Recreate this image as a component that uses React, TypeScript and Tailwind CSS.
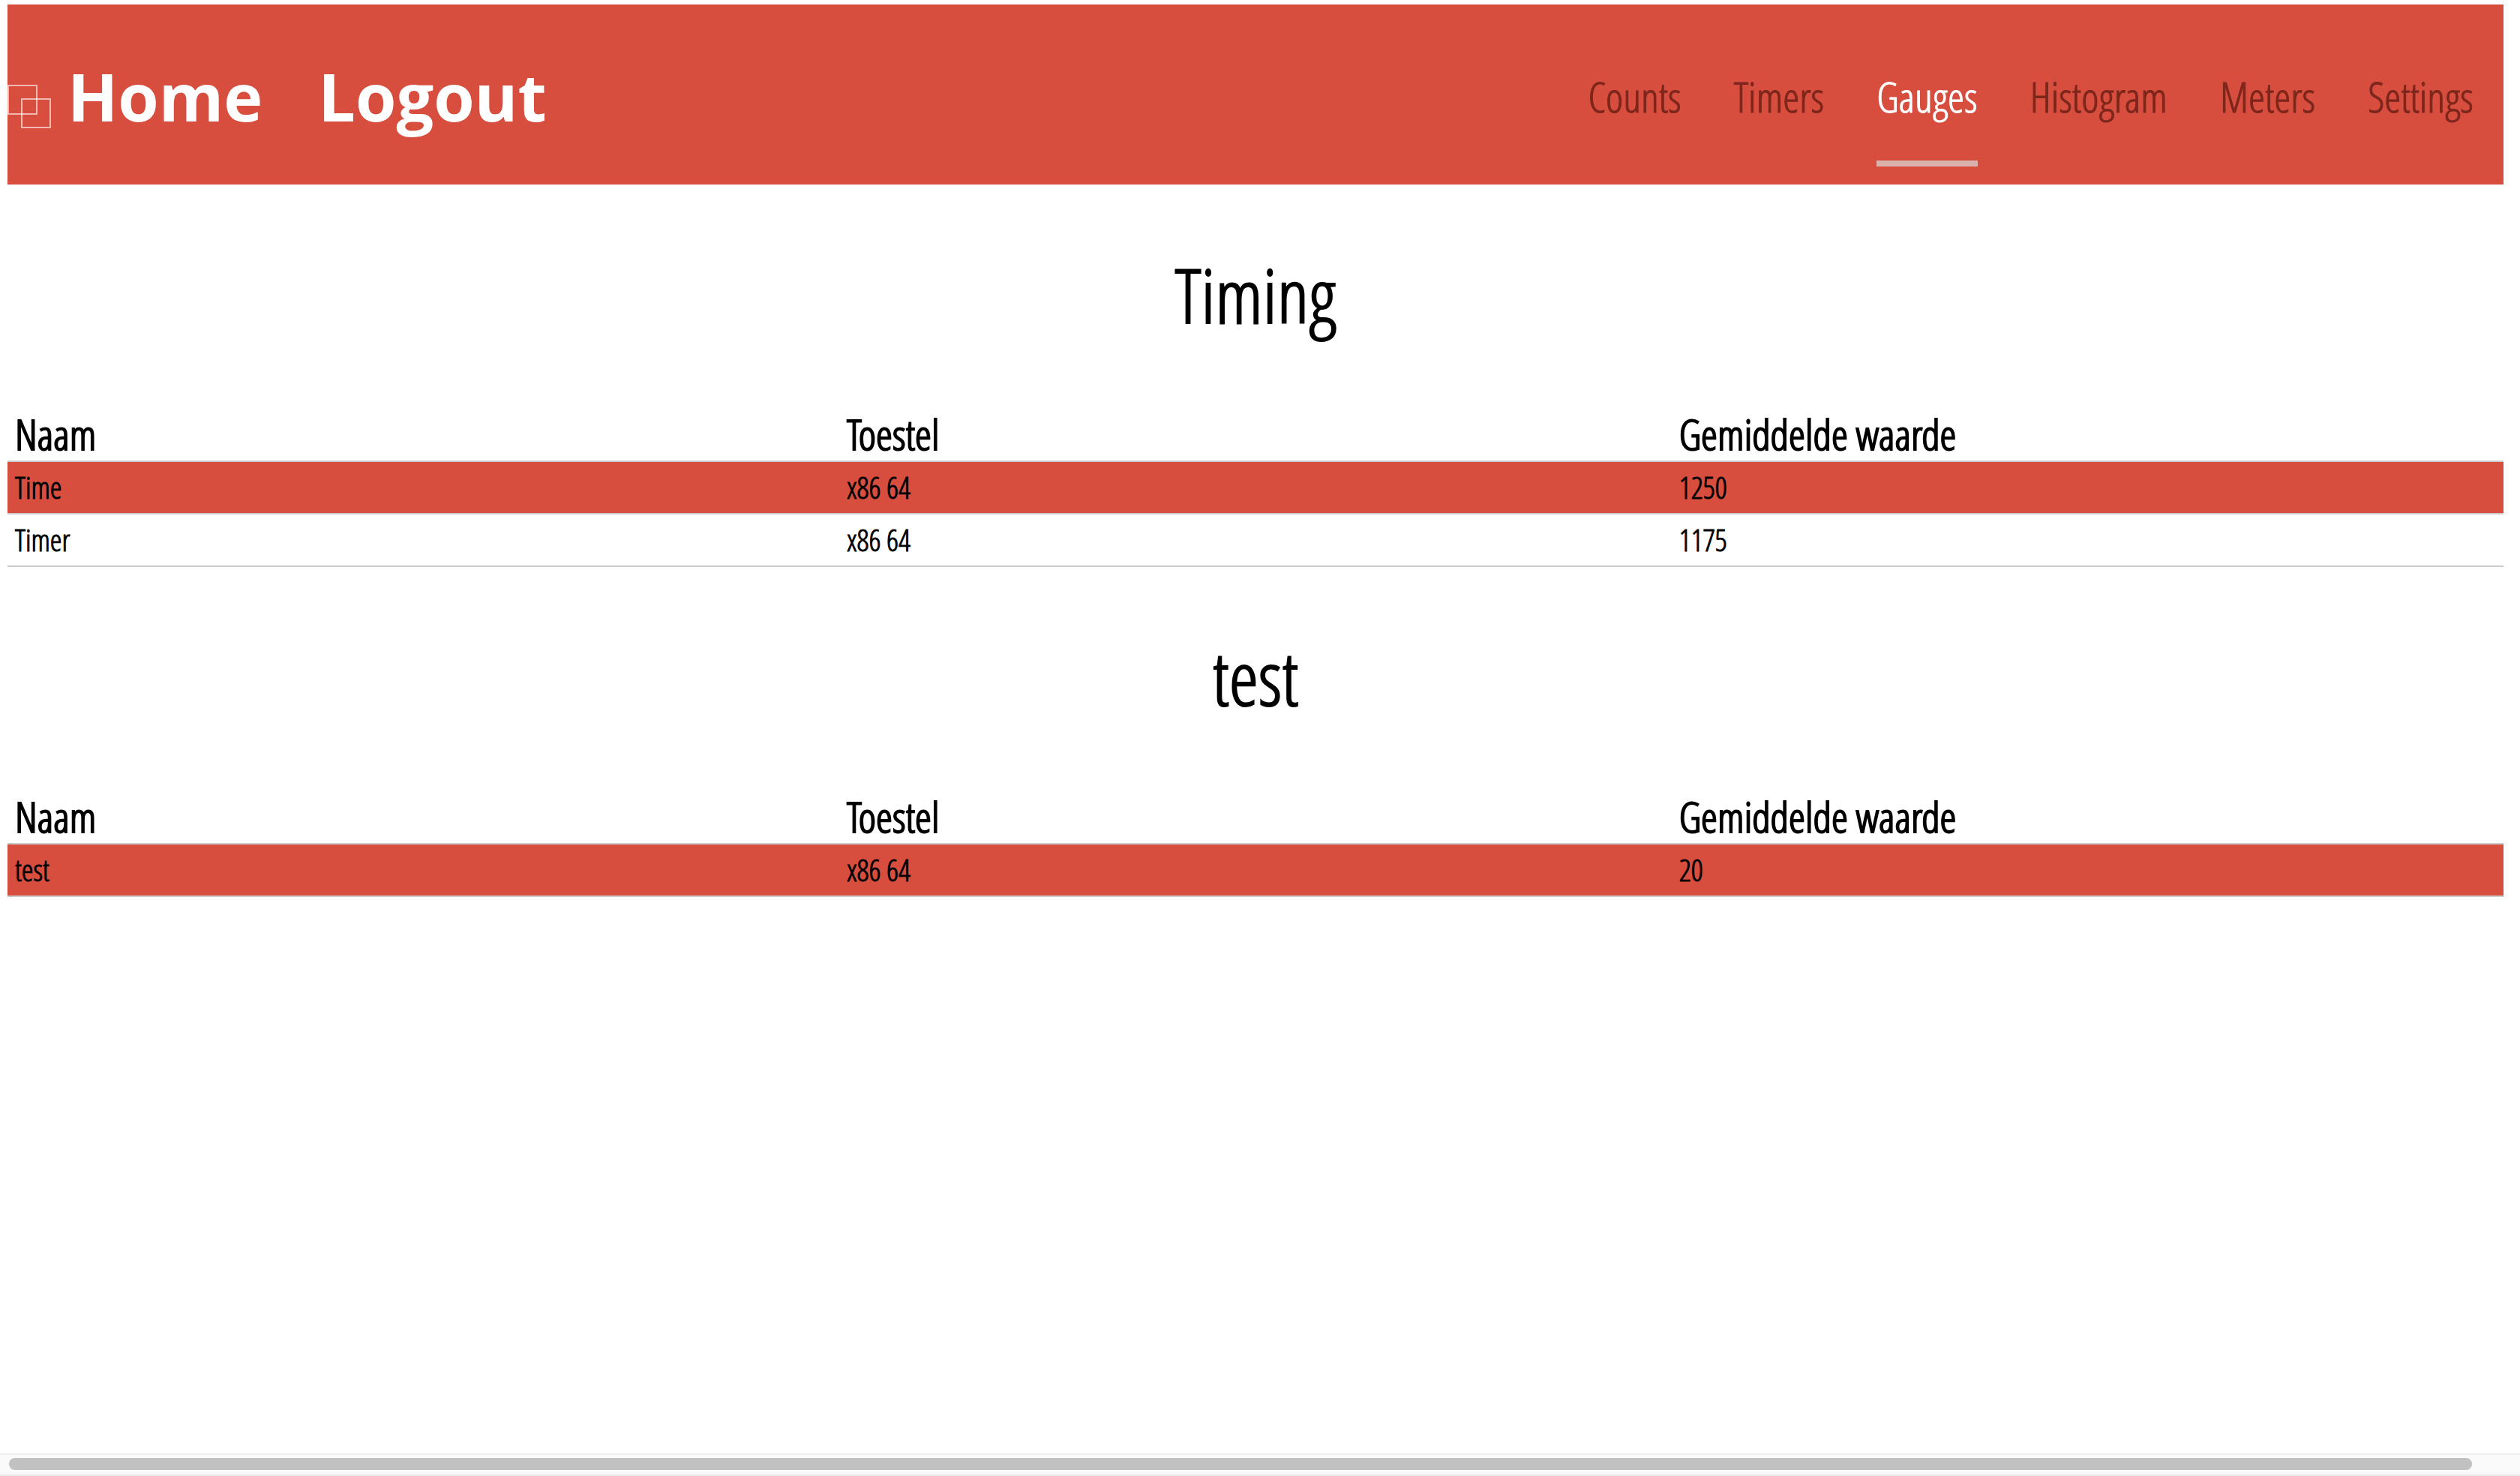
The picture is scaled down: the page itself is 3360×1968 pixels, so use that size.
type Row = { name: string; device: string; value: string };

const navItems = ["Counts", "Timers", "Gauges", "Histogram", "Meters", "Settings"];

const sections: { title: string; rows: Row[] }[] = [
  {
    title: "Timing",
    rows: [
      { name: "Time", device: "x86 64", value: "1250" },
      { name: "Timer", device: "x86 64", value: "1175" },
    ],
  },
  { title: "test", rows: [{ name: "test", device: "x86 64", value: "20" }] },
];

function SquaresIcon() {
  return (
    <svg viewBox="0 0 58 58" className="mt-7 size-[58px] shrink-0" fill="none" stroke="#fff" strokeOpacity="0.6" strokeWidth="2" aria-hidden="true">
      <rect x="1" y="1" width="38" height="38" />
      <rect x="19" y="19" width="38" height="38" />
    </svg>
  );
}

function Header() {
  return (
    <header className="flex h-60 items-center justify-between bg-[#d74e3e] pt-1 pr-10">
      <div className="flex items-center font-['Open_Sans',sans-serif] text-[88px] leading-[120px] font-bold text-white">
        <SquaresIcon />
        <a href="#home" className="ml-[22px]">Home</a>
        <a href="#logout" className="ml-[74px]">Logout</a>
      </div>
      <nav className="flex gap-[70px] text-[56px] leading-[60px] [-webkit-text-stroke:1px]">
        {navItems.map((item) => (
          <a
            key={item}
            href={"#" + item.toLowerCase()}
            aria-current={item === "Gauges" ? "page" : undefined}
            className={
              item === "Gauges"
                ? "border-y-8 border-t-transparent border-b-[#dbb1ac] py-14 text-white"
                : "border-y-8 border-transparent py-14 text-[#7e261c]"
            }
          >
            {item}
          </a>
        ))}
      </nav>
    </header>
  );
}

function Section({ title, rows }: { title: string; rows: Row[] }) {
  return (
    <section>
      <h2 className="pt-[86px] pb-[89px] text-center text-[100px] leading-[120px] [-webkit-text-stroke:2px]">{title}</h2>
      <table className="w-full table-fixed text-left">
        <thead>
          <tr className="h-[74px] border-b-2 border-[#cbcbcb] text-[56px] leading-[60px] [-webkit-text-stroke:2px]">
            <th className="px-[10px] font-normal">Naam</th>
            <th className="px-[10px] font-normal">Toestel</th>
            <th className="px-[10px] font-normal">Gemiddelde waarde</th>
          </tr>
        </thead>
        <tbody className="text-[40px] leading-[48px] [-webkit-text-stroke:1px]">
          {rows.map((row) => (
            <tr key={row.name} className="h-[70px] border-b-2 border-[#cbcbcb] odd:bg-[#d74e3e]">
              <td className="px-[10px]">{row.name}</td>
              <td className="px-[10px]">{row.device}</td>
              <td className="px-[10px]">{row.value}</td>
            </tr>
          ))}
        </tbody>
      </table>
    </section>
  );
}

export default function App() {
  return (
    <div className="flex min-h-screen flex-col bg-white font-['Open_Sans_Condensed_Light','Roboto_Condensed',sans-serif] text-black">
      <div className="pt-[6px] pr-[22px] pl-[10px]">
        <Header />
        <main>
          {sections.map((section) => (
            <Section key={section.title} {...section} />
          ))}
        </main>
      </div>
      <div className="mt-auto border-y-2 border-t-[#ededed] border-b-[#e8e8e8] bg-[#fafafa] pt-1 pr-16 pb-[6px] pl-3">
        <div className="h-4 rounded-full bg-[#c1c1c1]" />
      </div>
    </div>
  );
}
